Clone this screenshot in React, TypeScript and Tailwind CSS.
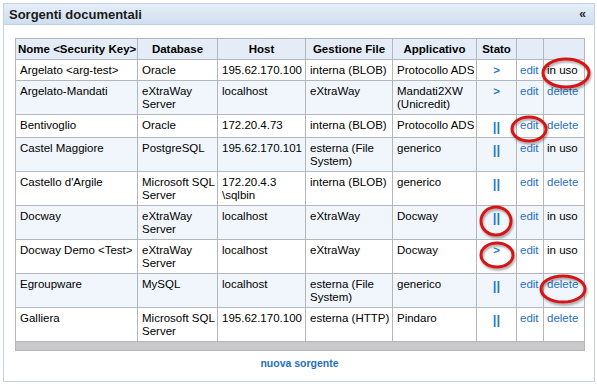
import React from 'react';

type Row = {
  nome: string;
  db: string[];
  host: string[];
  gestione: string[];
  app: string[];
  stato: 'run' | 'pause';
  uso: boolean;
};

const rows: Row[] = [
  { nome: 'Argelato <arg-test>', db: ['Oracle'], host: ['195.62.170.100'], gestione: ['interna (BLOB)'], app: ['Protocollo ADS'], stato: 'run', uso: true },
  { nome: 'Argelato-Mandati', db: ['eXtraWay', 'Server'], host: ['localhost'], gestione: ['eXtraWay'], app: ['Mandati2XW', '(Unicredit)'], stato: 'run', uso: false },
  { nome: 'Bentivoglio', db: ['Oracle'], host: ['172.20.4.73'], gestione: ['interna (BLOB)'], app: ['Protocollo ADS'], stato: 'pause', uso: false },
  { nome: 'Castel Maggiore', db: ['PostgreSQL'], host: ['195.62.170.101'], gestione: ['esterna (File', 'System)'], app: ['generico'], stato: 'pause', uso: true },
  { nome: "Castello d'Argile", db: ['Microsoft SQL', 'Server'], host: ['172.20.4.3', '\\sqlbin'], gestione: ['interna (BLOB)'], app: ['generico'], stato: 'pause', uso: false },
  { nome: 'Docway', db: ['eXtraWay', 'Server'], host: ['localhost'], gestione: ['eXtraWay'], app: ['Docway'], stato: 'pause', uso: true },
  { nome: 'Docway Demo <Test>', db: ['eXtraWay', 'Server'], host: ['localhost'], gestione: ['eXtraWay'], app: ['Docway'], stato: 'run', uso: true },
  { nome: 'Egroupware', db: ['MySQL'], host: ['localhost'], gestione: ['esterna (File', 'System)'], app: ['generico'], stato: 'pause', uso: false },
  { nome: 'Galliera', db: ['Microsoft SQL', 'Server'], host: ['195.62.170.100'], gestione: ['esterna (HTTP)'], app: ['Pindaro'], stato: 'pause', uso: false },
];

const Lines = ({ items }: { items: string[] }) => (
  <>
    {items.map((t, i) => (
      <div key={i}>{t}</div>
    ))}
  </>
);

const td = 'border border-[#b3b7bc] align-top px-[4px] pt-[4px] pb-[3px] whitespace-nowrap';
const th = 'border border-[#b3b7bc] px-[2px] pt-[4px] pb-[3px] font-bold text-center whitespace-nowrap';

export default function App() {
  return (
    <div className="relative w-[597px] h-[384px] bg-white text-[11.5px] leading-[13px] text-black" style={{ fontFamily: '"Liberation Sans", Arial, sans-serif' }}>
      <div className="ml-[3px] mt-[3px] w-[592px] h-[379px] border border-[#c2d2e4] flex flex-col">
        <div className="h-[21px] border-b border-[#c2d2e4] bg-gradient-to-b from-[#e6eef8] to-[#cfdef0] flex items-center justify-between pl-[5px] pr-[8px]">
          <span className="font-bold text-[13px] text-[#1b1b1b]">Sorgenti documentali</span>
          <span className="font-bold text-[12px] text-[#2a2a2a]">«</span>
        </div>
        <div className="pt-[13px] pl-[11px]">
          <table className="border-collapse w-[569px] table-fixed">
            <colgroup>
              <col className="w-[122px]" />
              <col className="w-[80px]" />
              <col className="w-[88px]" />
              <col className="w-[87px]" />
              <col className="w-[84px]" />
              <col className="w-[40px]" />
              <col className="w-[27px]" />
              <col className="w-[41px]" />
            </colgroup>
            <thead>
              <tr className="bg-[#e4edf7]">
                <th className={th}>Nome &lt;Security Key&gt;</th>
                <th className={th}>Database</th>
                <th className={th}>Host</th>
                <th className={th}>Gestione File</th>
                <th className={th}>Applicativo</th>
                <th className={th}>Stato</th>
                <th className={th}></th>
                <th className={th}></th>
              </tr>
            </thead>
            <tbody>
              {rows.map((r, i) => (
                <tr key={i} className={i % 2 === 1 ? 'bg-[#f1f6fc]' : 'bg-white'}>
                  <td className={td}>{r.nome}</td>
                  <td className={td}><Lines items={r.db} /></td>
                  <td className={td}><Lines items={r.host} /></td>
                  <td className={td}><Lines items={r.gestione} /></td>
                  <td className={td}><Lines items={r.app} /></td>
                  <td className={`${td} text-center font-bold text-[#1f7ccc]`}>
                    {r.stato === 'run' ? <span>&gt;</span> : <span className="text-[13px] leading-[15px]">||</span>}
                  </td>
                  <td className={`${td} text-[#1f6fbf] !px-[3px]`}>edit</td>
                  <td className={`${td} ${r.uso ? 'text-black' : 'text-[#1f6fbf]'} !px-[3px]`}>{r.uso ? 'in uso' : 'delete'}</td>
                </tr>
              ))}
              <tr className="bg-[#c9c9c9]">
                <td colSpan={8} className="h-[9px] border border-[#b3b7bc] p-0"></td>
              </tr>
            </tbody>
          </table>
          <div className="w-[569px] text-center pt-[6px] font-bold text-[10.5px] text-[#1f6fbf]">nuova sorgente</div>
        </div>
      </div>
      <svg className="absolute left-0 top-0 pointer-events-none" width="597" height="384">
        <defs>
          <filter id="sh" x="-20%" y="-20%" width="140%" height="140%">
            <feDropShadow dx="1" dy="2" stdDeviation="1.2" floodColor="#000" floodOpacity="0.35" />
          </filter>
        </defs>
        <g fill="none" stroke="#d41414" strokeWidth="3" filter="url(#sh)">
          <ellipse cx="566" cy="70" rx="23" ry="14" />
          <ellipse cx="529" cy="126" rx="17" ry="12" />
          <ellipse cx="496" cy="218" rx="15" ry="14" />
          <ellipse cx="497" cy="252" rx="16" ry="12" />
          <ellipse cx="563" cy="286" rx="22" ry="13" />
        </g>
      </svg>
    </div>
  );
}
